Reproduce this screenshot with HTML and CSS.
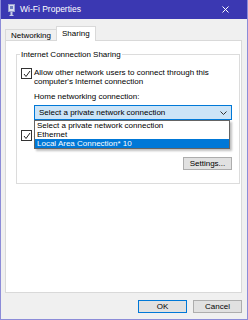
FILE: index.html
```html
<!DOCTYPE html>
<html lang="en">
  <head>
    <meta charset="UTF-8" />
    <meta name="viewport" content="width=device-width, initial-scale=1.0" />
    <title>Wi-Fi Properties</title>
    <link rel="stylesheet" href="styles.css">
  </head>
  <body>
    <div class="window">
      <div class="titlebar">
        <svg class="app-icon" width="7" height="12" viewBox="0 0 7 12">
          <rect x="0.5" y="0.5" width="6" height="7" fill="#d8dcf0" stroke="#9aa2d0" />
          <rect x="2" y="2" width="3" height="3" fill="#6f7fc0" />
          <rect x="2.5" y="8" width="2" height="3" fill="#c8cce8" />
          <rect x="1.5" y="11" width="4" height="1" fill="#c8cce8" />
        </svg>
        <span class="title">Wi-Fi Properties</span>
        <svg class="close" width="7" height="7" viewBox="0 0 7 7">
          <path d="M0.5 0.5 L6.5 6.5 M6.5 0.5 L0.5 6.5" stroke="#fff" stroke-width="1" />
        </svg>
      </div>

      <div class="tabs">
        <div class="tab">Networking</div>
        <div class="tab active">Sharing</div>
      </div>

      <div class="panel">
        <fieldset class="group">
          <legend>Internet Connection Sharing</legend>

          <div class="check-row">
            <span class="checkbox">
              <svg width="8" height="8" viewBox="0 0 8 8">
                <path d="M1 4 L3 6.5 L7 1" fill="none" stroke="#222" stroke-width="1" />
              </svg>
            </span>
            <span>Allow other network users to connect through this computer's Internet connection</span>
          </div>

          <div class="field-label">Home networking connection:</div>

          <div class="select">
            <span>Select a private network connection</span>
            <svg class="chevron" width="7" height="4" viewBox="0 0 7 4">
              <path d="M0.5 0.5 L3.5 3.5 L6.5 0.5" fill="none" stroke="#333" stroke-width="1" />
            </svg>
            <ul class="dropdown">
              <li>Select a private network connection</li>
              <li>Ethernet</li>
              <li class="selected">Local Area Connection* 10</li>
            </ul>
          </div>

          <!-- this row sits under the open list -->
          <div class="check-row second">
            <span class="checkbox">
              <svg width="8" height="8" viewBox="0 0 8 8">
                <path d="M1 4 L3 6.5 L7 1" fill="none" stroke="#222" stroke-width="1" />
              </svg>
            </span>
            <span>Allow other network users to control or disable the shared Internet connection</span>
          </div>

          <div class="settings-row">
            <button class="btn">Settings...</button>
          </div>
        </fieldset>
      </div>

      <div class="footer">
        <button class="btn default">OK</button>
        <button class="btn">Cancel</button>
      </div>
    </div>
  </body>
</html>
```

FILE: styles.css
```css
/* General styles */
body {
  margin: 0;
  font-family: "Liberation Sans", Arial, sans-serif;
  font-size: 8px;
  line-height: 9px;
  color: #000;
}

.window {
  width: 248px;
  height: 320px;
  box-sizing: border-box;
  border: 1px solid #8c8cd8;
  border-top: none;
  background-color: #f0f0f0;
  display: flex;
  flex-direction: column;
}

.titlebar {
  height: 19px;
  background-color: #3b38b2;
  display: flex;
  align-items: center;
  padding: 0 0 0 7px;
  color: white;
}

.app-icon {
  margin-right: 5px;
}

.title {
  font-size: 8.5px;
  flex: 1;
}

.close {
  margin-right: 18px;
}

/* Tabs */
.tabs {
  height: 21px;
  display: flex;
  align-items: flex-end;
  padding-left: 4px;
}

.tab {
  height: 10px;
  padding: 0 5px;
  border: 1px solid #d9d9d9;
  border-bottom: none;
  border-right: none;
  line-height: 11px;
}

.active {
  height: 14px;
  margin-bottom: -1px;
  background-color: white;
  border-right: 1px solid #d9d9d9;
  line-height: 13px;
  position: relative;
  z-index: 1;
}

.panel {
  height: 242px;
  margin: 0 5px 0 4px;
  background-color: white;
  border: 1px solid #d9d9d9;
  padding: 9px 7px 0 10px;
}

.group {
  margin: 0;
  padding: 9px 7px 13px 4px;
  border: 1px solid #dcdcdc;
}

.group legend {
  padding: 0 1px;
  margin-left: -1px;
}

.check-row {
  display: flex;
  align-items: flex-start;
}

.check-row.second {
  margin-top: 10px;
}

.checkbox {
  width: 9px;
  height: 9px;
  border: 1px solid #333;
  margin-right: 2px;
  flex-shrink: 0;
  display: flex;
  align-items: center;
  justify-content: center;
  background-color: white;
}

.field-label {
  margin: 6px 0 4px 13px;
}

/* Select with open list */
.select {
  position: relative;
  margin-left: 13px;
  width: 192px;
  height: 13px;
  border: 1px solid #0078d7;
  background-color: #cce4f7;
  display: flex;
  align-items: center;
  padding-left: 4px;
}

.select span {
  flex: 1;
}

.chevron {
  margin-right: 4px;
}

.dropdown {
  position: absolute;
  top: 14px;
  left: -1px;
  width: 194px;
  margin: 0;
  padding: 0;
  list-style: none;
  background-color: white;
  border: 1px solid #646464;
  box-shadow: 2px 2px 2px rgba(0, 0, 0, 0.25);
  z-index: 2;
}

.dropdown li {
  height: 9px;
  padding-left: 2px;
}

.dropdown .selected {
  background-color: #0078d7;
  color: white;
}

.settings-row {
  display: flex;
  justify-content: flex-end;
  margin-top: 9px;
}

.btn {
  font-family: "Liberation Sans", Arial, sans-serif;
  font-size: 8px;
  width: 49px;
  height: 13px;
  padding: 0;
  background-color: #e1e1e1;
  border: 1px solid #adadad;
  color: #000;
}

.btn.default {
  border-color: #0078d7;
}

.footer {
  display: flex;
  justify-content: flex-end;
  gap: 6px;
  margin-top: 7px;
  padding-right: 5px;
}
```
